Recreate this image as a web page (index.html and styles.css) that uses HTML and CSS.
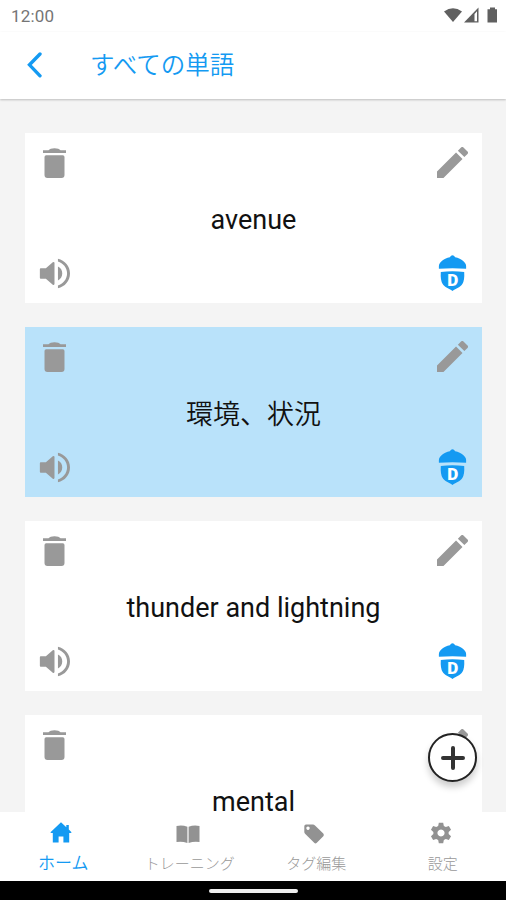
FILE: index.html
```
<!DOCTYPE html>
<html lang="ja">

<head>
    <meta charset="utf-8">
    <title>すべての単語</title>
    <link rel="stylesheet" href="styles.css">
</head>

<body>
    <!-- shared icons -->
    <svg class="sprite">
        <symbol id="trash" viewBox="0 0 24 30">
            <path d="M.5 2.3H6Q7.500 .2 12 .2T18 2.300H23.500V5H.5zM2 9Q2 7.300 3.700 7.300H20.300Q22 7.300 22 9V27Q22 30 19 30H5Q2 30 2 27z" />
        </symbol>
        <symbol id="pencil" viewBox="3 3 18 18">
            <path d="M3 17.250V21h3.750L17.810 9.940l-3.750-3.750L3 17.250zM20.710 7.040a1 1 0 0 0 0-1.410l-2.340-2.340a1 1 0 0 0-1.410 0l-1.830 1.830 3.750 3.750 1.830-1.830z" />
        </symbol>
        <symbol id="speaker" viewBox="3 3 18 18">
            <path d="M3.500 9.500Q3.500 9 4 9H7L11 5.500Q12 5 12 6V18Q12 19 11 18.500L7 15H4Q3.500 15 3.500 14.500zM16.500 12A4.500 4.500 0 0 0 14 7.970v8.050c1.480-.73 2.500-2.250 2.500-4.020zM14 3.400v1.700c2.890.86 5.300 3.540 5.300 6.900s-2.410 6.040-5.300 6.900v1.700c4.010-.91 7-4.320 7-8.600s-2.990-7.690-7-8.600z" />
        </symbol>
        <symbol id="acorn" viewBox="0 0 28 36">
            <path d="M.3 13.800Q-.3 9.500 2.500 6.800C5 4 8.500 2.700 11.300 2.200Q12.500 .2 14 .2T16.700 2.200C19.500 2.700 23 4 25.500 6.800Q28.300 9.500 27.700 13.800Q14 12.800 .3 13.800z" />
            <path d="M2.300 17Q14 15.500 25.700 17Q26.200 25 24 28.800C22 32.500 17.500 33.500 14 36C10.500 33.500 6 32.500 4 28.800Q1.800 25 2.300 17z" />
        </symbol>
    </svg>

    <div class="statusbar">
        <span>12:00</span>
        <svg class="status-icons" width="54" height="17" viewBox="0 0 54 17">
            <path d="M0 4.500Q9 -2 18 4.500L9 15z" />
            <path d="M20 15.500L34.500 .5V15.500z" />
            <path class="bar" d="M30.500 7L33 4.200V14.200H30.500z" />
            <path d="M43.500 2.200H46V.5h5v1.700h2V15.500H43.500z" />
        </svg>
    </div>

    <div class="header">
        <svg class="back" width="15" height="26" viewBox="0 0 15 26">
            <path d="M13 2L2.500 12.800 13 23.800" />
        </svg>
        <h1>すべての単語</h1>
    </div>

    <div class="list">
        <div class="card">
            <div class="row">
                <svg class="icon trash"><use href="#trash" /></svg>
                <svg class="icon"><use href="#pencil" /></svg>
            </div>
            <p class="word">avenue</p>
            <div class="row">
                <svg class="icon"><use href="#speaker" /></svg>
                <svg class="icon acorn" viewBox="0 0 28 36"><use href="#acorn" /><text x="14.300" y="30.500" text-anchor="middle">D</text></svg>
            </div>
        </div>
        <div class="card flipped">
            <div class="row">
                <svg class="icon trash"><use href="#trash" /></svg>
                <svg class="icon"><use href="#pencil" /></svg>
            </div>
            <p class="word">環境、状況</p>
            <div class="row">
                <svg class="icon"><use href="#speaker" /></svg>
                <svg class="icon acorn" viewBox="0 0 28 36"><use href="#acorn" /><text x="14.300" y="30.500" text-anchor="middle">D</text></svg>
            </div>
        </div>
        <div class="card">
            <div class="row">
                <svg class="icon trash"><use href="#trash" /></svg>
                <svg class="icon"><use href="#pencil" /></svg>
            </div>
            <p class="word">thunder and lightning</p>
            <div class="row">
                <svg class="icon"><use href="#speaker" /></svg>
                <svg class="icon acorn" viewBox="0 0 28 36"><use href="#acorn" /><text x="14.300" y="30.500" text-anchor="middle">D</text></svg>
            </div>
        </div>
        <div class="card">
            <div class="row">
                <svg class="icon trash"><use href="#trash" /></svg>
                <svg class="icon"><use href="#pencil" /></svg>
            </div>
            <p class="word">mental</p>
        </div>
    </div>

    <div class="add">
        <svg width="26" height="26" viewBox="0 0 26 26">
            <path d="M13 3v20M3 13h20" />
        </svg>
    </div>

    <div class="tabs">
        <div class="tab active">
            <svg width="24" height="24" viewBox="0 0 24 24">
                <path d="M12 1.200L1.500 11.200Q1.500 12 2.300 12H3.800V21.500H9.600V15.500h4.800V21.500h5.800V12H21.700Q22.500 12 22.500 11.200L19.800 8.600V4h-2.500v2.200z" />
            </svg>
            <span>ホーム</span>
        </div>
        <div class="tab">
            <svg width="24" height="24" viewBox="0 0 24 24">
                <path d="M.5 5Q6 3.500 11.400 5.800V22Q6 20 .5 21zM23.500 5Q18 3.500 12.600 5.800V22Q18 20 23.500 21z" />
            </svg>
            <span>トレーニング</span>
        </div>
        <div class="tab">
            <svg width="24" height="24" viewBox="0 0 24 24">
                <path fill-rule="evenodd" d="M4 3.500H11Q12 3.500 13 4.500L21.300 12.500Q22.500 14 21.300 15.200L14.800 21.800Q13.500 23 12.200 21.800L3.300 13Q2.300 12 2.300 11V5.200Q2.300 3.500 4 3.500zM6 5.500a1.700 1.700 0 1 0 .01 0z" />
            </svg>
            <span>タグ編集</span>
        </div>
        <div class="tab">
            <svg width="24" height="24" viewBox="1 1 22 22">
                <path fill-rule="evenodd" d="M10 2.500h4l.6 3 1.800 1 2.800-1 2 3.500-2.200 2v2l2.200 2-2 3.500-2.800-1-1.800 1-.6 3h-4l-.6-3-1.800-1-2.800 1-2-3.500 2.200-2v-2l-2.200-2 2-3.500 2.800 1 1.800-1zM12 8.700a3.300 3.300 0 1 0 .01 0z" />
            </svg>
            <span>設定</span>
        </div>
    </div>
    <div class="navbar"><div class="handle"></div></div>
</body>

</html>
```
FILE: styles.css
```
* {
    box-sizing: border-box;
}

body {
    margin: 0;
    height: 900px;
    display: flex;
    flex-direction: column;
    overflow: hidden;
    position: relative;
    background: #f4f4f4;
    font-family: Roboto, "Noto Sans CJK JP", sans-serif;
}

.sprite {
    display: none;
}

.statusbar {
    flex: none;
    height: 32px;
    padding: 0 8px 0 11px;
    display: flex;
    justify-content: space-between;
    align-items: center;
    background: #fff;
    color: #757575;
    font-size: 17px;
    letter-spacing: 0.2px;
}

.status-icons {
    fill: #606060;
    margin-top: -2px;
}

.status-icons .bar {
    fill: #fff;
}

.header {
    flex: none;
    height: 67px;
    padding-left: 27px;
    display: flex;
    align-items: center;
    background: #fff;
    box-shadow: 0 1px 2px rgba(0, 0, 0, 0.22);
}

.header h1 {
    margin: 0 0 0 48px;
    color: #149af2;
    font-size: 24.5px;
    line-height: 36px;
    font-weight: 350;
}

.back {
    margin-top: -2px;
    fill: none;
    stroke: #149af2;
    stroke-width: 3.4;
    stroke-linecap: round;
}

/* word cards */
.list {
    flex: 1;
    min-height: 0;
    overflow: hidden;
    padding: 34px 24px 0 25px;
    display: flex;
    flex-direction: column;
    gap: 24px;
}

.card {
    flex: none;
    height: 170px;
    padding: 14px 14px 12px;
    display: flex;
    flex-direction: column;
    background: #fff;
}

.card.flipped {
    background: #b9e2fa;
}

.row {
    display: flex;
    justify-content: space-between;
    align-items: center;
}

.row:last-child {
    margin-top: auto;
}

.icon {
    width: 31px;
    height: 31px;
    fill: #999;
}

.icon.trash {
    height: 30px;
}

.icon.acorn {
    height: 36px;
    fill: #149af2;
}

.icon text {
    fill: #fff;
    font-size: 17px;
    font-weight: 900;
}

.word {
    margin: 22px 0 0;
    text-align: center;
    font-size: 27px;
    line-height: 40px;
    color: #111;
}

.flipped .word {
    margin-top: 23px;
    font-weight: 350;
}

.add {
    position: absolute;
    left: 428px;
    top: 733px;
    width: 49px;
    height: 49px;
    display: flex;
    align-items: center;
    justify-content: center;
    border: 2px solid #222;
    border-radius: 50%;
    background: #fff;
    box-shadow: 0 5px 7px rgba(0, 0, 0, 0.2);
}

.add path {
    stroke: #333;
    stroke-width: 4;
    stroke-linecap: round;
}

/* bottom tabs */
.tabs {
    flex: none;
    height: 69px;
    padding-top: 9px;
    display: flex;
    background: #fff;
}

.tab {
    flex: 1;
    display: flex;
    flex-direction: column;
    align-items: center;
    color: #999;
    font-size: 15px;
    line-height: 22px;
    font-weight: 300;
}

.tab svg {
    fill: #929292;
    margin: 0 4px 8px 0;
}

.tab.active {
    color: #149af2;
    font-size: 17px;
    font-weight: 350;
}

.tab.active svg {
    fill: #149af2;
    margin: 0 5px 7px 0;
}

.navbar {
    flex: none;
    height: 19px;
    padding-top: 8px;
    background: #000;
}

.handle {
    width: 89px;
    height: 4px;
    margin: 0 auto;
    border-radius: 2px;
    background: #eee;
}
```
